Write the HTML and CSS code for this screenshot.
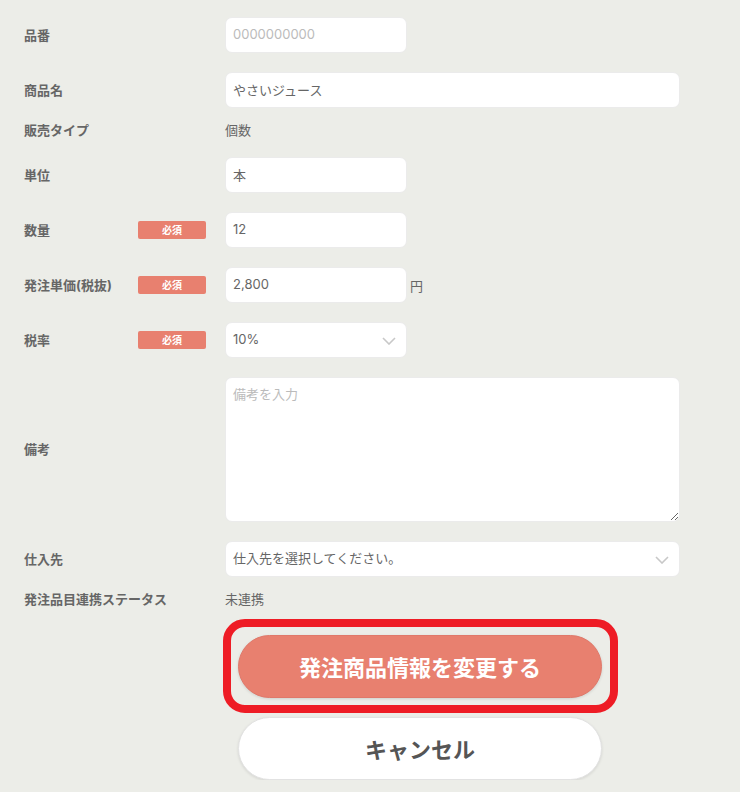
FILE: index.html
```html
<!DOCTYPE html>
<html lang="ja">
<head>
  <meta charset="UTF-8" />
  <title>発注商品情報の変更</title>
  <link rel="stylesheet" href="styles.css">
</head>
<body>
  <div class="form">
    <div class="row">
      <div class="label">品番</div>
      <div class="req"></div>
      <input class="field short" type="text" placeholder="0000000000" />
    </div>

    <div class="row">
      <div class="label">商品名</div>
      <div class="req"></div>
      <input class="field long" type="text" value="やさいジュース" />
    </div>

    <div class="row text">
      <div class="label">販売タイプ</div>
      <div class="req"></div>
      <div class="value">個数</div>
    </div>

    <div class="row">
      <div class="label">単位</div>
      <div class="req"></div>
      <input class="field short" type="text" value="本" />
    </div>

    <div class="row">
      <div class="label">数量</div>
      <div class="req"><span class="badge">必須</span></div>
      <input class="field short" type="text" value="12" />
    </div>

    <div class="row">
      <div class="label">発注単価(税抜)</div>
      <div class="req"><span class="badge">必須</span></div>
      <input class="field short" type="text" value="2,800" />
      <span class="unit">円</span>
    </div>

    <div class="row">
      <div class="label">税率</div>
      <div class="req"><span class="badge">必須</span></div>
      <div class="select short">
        <select class="field">
          <option>10%</option>
          <option>8%</option>
        </select>
        <svg class="chevron" width="14" height="8" viewBox="0 0 14 8">
          <path d="M1 1 L7 7 L13 1" fill="none" stroke="#c8c8c8" stroke-width="1.6" />
        </svg>
      </div>
    </div>

    <div class="row">
      <div class="label">備考</div>
      <div class="req"></div>
      <textarea class="field long memo" placeholder="備考を入力"></textarea>
    </div>

    <div class="row">
      <div class="label">仕入先</div>
      <div class="req"></div>
      <div class="select long">
        <select class="field">
          <option>仕入先を選択してください。</option>
        </select>
        <svg class="chevron" width="14" height="8" viewBox="0 0 14 8">
          <path d="M1 1 L7 7 L13 1" fill="none" stroke="#c8c8c8" stroke-width="1.6" />
        </svg>
      </div>
    </div>

    <div class="row text">
      <div class="label">発注品目連携ステータス</div>
      <div class="req"></div>
      <div class="value">未連携</div>
    </div>

    <div class="actions">
      <div class="submit-wrap">
        <button class="btn primary" type="button">発注商品情報を変更する</button>
        <span class="highlight"></span>
      </div>
      <button class="btn cancel" type="button">キャンセル</button>
    </div>
  </div>
</body>
</html>
```

FILE: styles.css
```css
body {
  margin: 0;
  background-color: #ecede8;
  font-family: "Inter", "Noto Sans CJK JP", sans-serif;
  color: #666;
}
.form {
  padding: 17px 0 0 24px;
}
.row {
  display: flex;
  align-items: center;
  margin-bottom: 19px;
}
.row.text {
  margin-top: -6px;
  margin-bottom: 16px;
  line-height: 18px;
}
.label {
  width: 114px;
  flex-shrink: 0;
  white-space: nowrap;
  font-size: 13px;
  font-weight: 700;
  color: #666;
  padding-bottom: 2px;
}
.req {
  width: 68px;
  margin-right: 19px;
  flex-shrink: 0;
}
.badge {
  display: block;
  height: 18px;
  line-height: 18px;
  background-color: #e8806f;
  border-radius: 2px;
  color: white;
  font-size: 10px;
  font-weight: 700;
  text-align: center;
}
.value {
  font-size: 13px;
  color: #666;
  padding-bottom: 2px;
}
.field {
  box-sizing: border-box;
  height: 36px;
  padding: 0 7px 2px;
  border: 1px solid #ebebeb;
  border-radius: 7px;
  background: white;
  font-family: inherit;
  font-size: 13px;
  color: #666;
  outline: none;
}
.field::placeholder {
  color: #bbb;
}
.short {
  width: 182px;
}
.long {
  width: 455px;
}
.unit {
  margin-left: 3px;
  font-size: 13px;
  color: #666;
}
.select {
  position: relative;
}
.select select {
  width: 100%;
  appearance: none;
  -webkit-appearance: none;
}
.chevron {
  position: absolute;
  right: 11px;
  top: 15px;
}
.memo {
  height: 145px;
  padding: 7px;
  line-height: 18px;
  resize: vertical;
}
.actions {
  margin: 25px 0 0 214px;
  width: 364px;
}
.submit-wrap {
  position: relative;
  margin-bottom: 19px;
}
.btn {
  display: block;
  width: 364px;
  height: 63px;
  border-radius: 32px;
  font-family: inherit;
  font-size: 22px;
  font-weight: 700;
  cursor: pointer;
  padding-bottom: 2px;
}
.primary {
  background-color: #e8806f;
  border: 1px solid #e0786a;
  color: white;
  box-shadow: 0 1px 3px rgba(0,0,0,0.12);
}
.cancel {
  background: white;
  border: 1px solid #e2e2e2;
  color: #555;
  box-shadow: 0 1px 3px rgba(0,0,0,0.1);
}
.highlight {
  position: absolute;
  top: -16px;
  left: -15px;
  right: -16px;
  bottom: -15px;
  border: 8px solid #ee1c25;
  border-radius: 22px;
  pointer-events: none;
}
```
